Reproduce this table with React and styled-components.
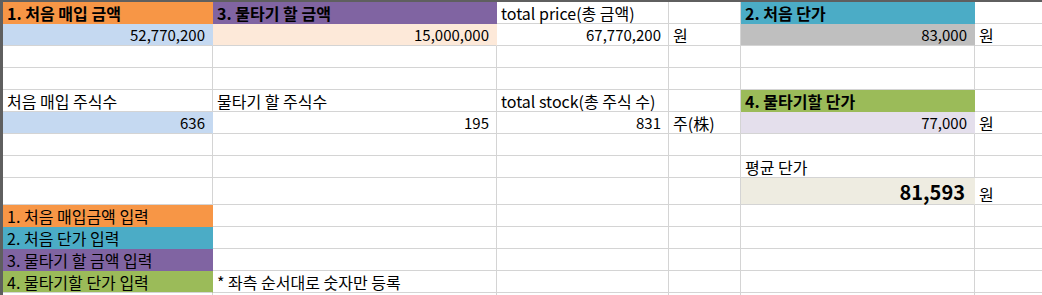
import React from "react";
import styled, { createGlobalStyle } from "styled-components";

const GlobalStyle = createGlobalStyle`
  html, body {
    margin: 0;
    padding: 0;
    background: #ffffff;
    overflow: hidden;
  }
  body {
    font-family: "Noto Sans CJK KR", sans-serif;
    color: #000000;
  }
`;

// Excel theme fills
const FILL = {
  orange: "#f79646",
  purple: "#8064a2",
  teal: "#4bacc6",
  green: "#9bbb59",
  blue: "#c5d9f1",
  peach: "#fde9d9",
  gray: "#bfbfbf",
  lavender: "#e4dfec",
  beige: "#eeece1",
};

const GRID_LINE = "#d4d4d4";

const Sheet = styled.div`
  display: grid;
  grid-template-columns: 210px 284px 172px 72px 234px 120px;
  border-top: 2px solid #5f5f5f;
  border-left: 3px solid #5f5f5f;
  width: max-content;
`;

const fontSize = (p) => (p.$big ? 20 : p.$right ? 15 : 16);

const Cell = styled.div`
  box-sizing: border-box;
  height: ${(p) => (p.$tall ? 27 : 22)}px;
  padding: 0 ${(p) => (p.$big ? 9 : 7)}px 0 4px;
  display: flex;
  align-items: flex-end;
  justify-content: ${(p) => (p.$right ? "flex-end" : "flex-start")};
  background: ${(p) => (p.$fill ? FILL[p.$fill] : "transparent")};
  border-right: 1px solid ${(p) => (p.$fill && p.$joinRight ? FILL[p.$fill] : GRID_LINE)};
  border-bottom: 1px solid ${(p) => (p.$fill && p.$joinBelow ? FILL[p.$fill] : GRID_LINE)};
  font-size: ${fontSize}px;
  font-weight: ${(p) => (p.$bold ? 700 : 400)};
  line-height: ${(p) => (p.$big ? 25 : 20)}px;
  white-space: nowrap;
  overflow: visible;
`;

// each row: list of [text, options]
const rows = [
  [
    ["1. 처음 매입 금액", { fill: "orange", bold: true, joinBelow: true, joinRight: true }],
    ["3. 물타기 할 금액", { fill: "purple", bold: true, joinBelow: true, joinRight: true }],
    ["total price(총 금액)"],
    [""],
    ["2. 처음 단가", { fill: "teal", bold: true, joinBelow: true, joinRight: true }],
    [""],
  ],
  [
    ["52,770,200", { fill: "blue", right: true, joinRight: true }],
    ["15,000,000", { fill: "peach", right: true, joinRight: true }],
    ["67,770,200", { right: true }],
    ["원"],
    ["83,000", { fill: "gray", right: true, joinRight: true }],
    ["원"],
  ],
  [[""], [""], [""], [""], [""], [""]],
  [[""], [""], [""], [""], [""], [""]],
  [
    ["처음 매입 주식수"],
    ["물타기 할 주식수"],
    ["total stock(총 주식 수)"],
    [""],
    ["4. 물타기할 단가", { fill: "green", bold: true, joinBelow: true, joinRight: true }],
    [""],
  ],
  [
    ["636", { fill: "blue", right: true, joinRight: true }],
    ["195", { right: true }],
    ["831", { right: true }],
    ["주(株)"],
    ["77,000", { fill: "lavender", right: true, joinRight: true }],
    ["원"],
  ],
  [[""], [""], [""], [""], [""], [""]],
  [[""], [""], [""], [""], ["평균 단가"], [""]],
  [
    ["", { tall: true }],
    ["", { tall: true }],
    ["", { tall: true }],
    ["", { tall: true }],
    ["81,593", { fill: "beige", right: true, bold: true, big: true, tall: true, joinRight: true }],
    ["원", { tall: true }],
  ],
  [
    ["1. 처음 매입금액 입력", { fill: "orange", joinBelow: true, joinRight: true }],
    [""], [""], [""], [""], [""],
  ],
  [
    ["2. 처음 단가 입력", { fill: "teal", joinBelow: true, joinRight: true }],
    [""], [""], [""], [""], [""],
  ],
  [
    ["3. 물타기 할 금액 입력", { fill: "purple", joinBelow: true, joinRight: true }],
    [""], [""], [""], [""], [""],
  ],
  [
    ["4. 물타기할 단가 입력", { fill: "green", joinRight: true }],
    ["* 좌측 순서대로 숫자만 등록"],
    [""], [""], [""], [""],
  ],
  [[""], [""], [""], [""], [""], [""]],
];

const App = () => {
  return (
    <>
      <GlobalStyle />
      <Sheet>
        {rows.map((row, r) =>
          row.map(([text, o = {}], c) => (
            <Cell
              key={`${r}-${c}`}
              $fill={o.fill}
              $bold={o.bold}
              $big={o.big}
              $right={o.right}
              $tall={o.tall}
              $joinBelow={o.joinBelow}
              $joinRight={o.joinRight}
            >
              {text}
            </Cell>
          ))
        )}
      </Sheet>
    </>
  );
};

export default App;
